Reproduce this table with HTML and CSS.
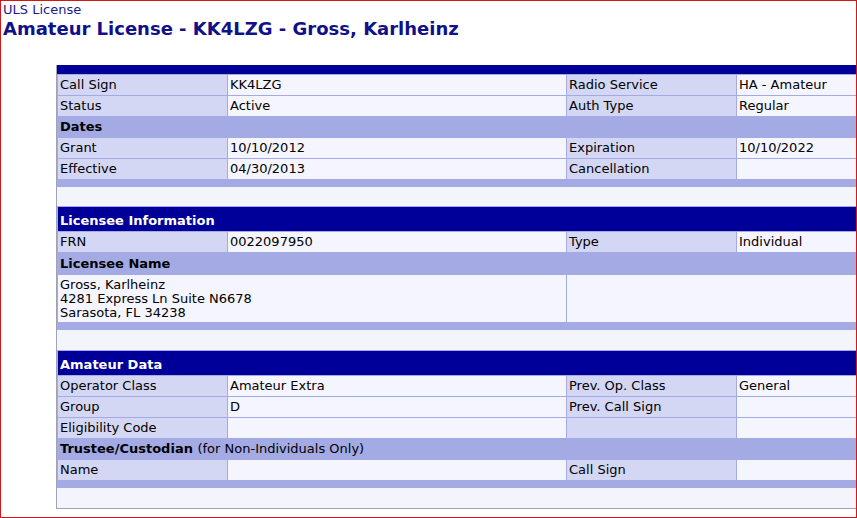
FILE: index.html
```html
<!DOCTYPE html>
<html>
<head>
<meta charset="utf-8">
<link rel="stylesheet" href="styles.css">
</head>
<body>
<div class="frame">
  <div class="crumb">ULS License</div>
  <h1 class="title">Amateur License - KK4LZG - Gross, Karlheinz</h1>
  <div class="panel">
    <div class="topbar"></div>
    <table class="sec">
      <colgroup><col class="c1"><col class="c2"><col class="c3"><col class="c4"></colgroup>
      <tr><td class="lbl">Call Sign</td><td class="val">KK4LZG</td><td class="lbl">Radio Service</td><td class="val">HA - Amateur</td></tr>
      <tr><td class="lbl">Status</td><td class="val">Active</td><td class="lbl">Auth Type</td><td class="val">Regular</td></tr>
      <tr><td class="sub" colspan="4">Dates</td></tr>
      <tr><td class="lbl">Grant</td><td class="val">10/10/2012</td><td class="lbl">Expiration</td><td class="val">10/10/2022</td></tr>
      <tr><td class="lbl">Effective</td><td class="val">04/30/2013</td><td class="lbl">Cancellation</td><td class="val"></td></tr>
      <tr><td class="band" colspan="4"></td></tr>
    </table>
    <div class="gap first"></div>
    <table class="sec">
      <colgroup><col class="c1"><col class="c2"><col class="c3"><col class="c4"></colgroup>
      <tr><td class="head" colspan="4">Licensee Information</td></tr>
      <tr><td class="lbl">FRN</td><td class="val">0022097950</td><td class="lbl">Type</td><td class="val">Individual</td></tr>
      <tr><td class="sub tall" colspan="4">Licensee Name</td></tr>
      <tr><td class="val addr" colspan="2">Gross, Karlheinz<br>4281 Express Ln Suite N6678<br>Sarasota, FL 34238</td><td class="val" colspan="2"></td></tr>
      <tr><td class="band" colspan="4"></td></tr>
    </table>
    <div class="gap"></div>
    <table class="sec">
      <colgroup><col class="c1"><col class="c2"><col class="c3"><col class="c4"></colgroup>
      <tr><td class="head" colspan="4">Amateur Data</td></tr>
      <tr><td class="lbl">Operator Class</td><td class="val">Amateur Extra</td><td class="lbl">Prev. Op. Class</td><td class="val">General</td></tr>
      <tr><td class="lbl">Group</td><td class="val">D</td><td class="lbl">Prev. Call Sign</td><td class="val"></td></tr>
      <tr><td class="lbl">Eligibility Code</td><td class="val"></td><td class="lbl"></td><td class="val"></td></tr>
      <tr><td class="sub" colspan="4">Trustee/Custodian <span class="note">(for Non-Individuals Only)</span></td></tr>
      <tr><td class="lbl">Name</td><td class="val"></td><td class="lbl">Call Sign</td><td class="val"></td></tr>
      <tr><td class="band" colspan="4"></td></tr>
    </table>
    <div class="gap"></div>
  </div>
</div>
</body>
</html>
```

FILE: styles.css
```css
html, body {
  margin: 0;
  padding: 0;
  background: #ffffff;
}
.frame {
  box-sizing: border-box;
  width: 857px;
  height: 518px;
  border: 1px solid #d01818;
  overflow: hidden;
  font-family: "DejaVu Sans", Verdana, sans-serif;
  color: #000;
}
.crumb {
  margin: 1px 0 0 2px;
  font-size: 13px;
  line-height: 15px;
  color: #1a1a8c;
}
.title {
  margin: 0 0 0 2px;
  font-size: 18px;
  line-height: 24px;
  font-weight: bold;
  color: #10108a;
}
.panel {
  margin: 24px 0 0 55px;
  width: 851px;
  background: #f4f4fd;
  border-left: 1px solid #a0a0b8;
  border-bottom: 1px solid #a0a0b8;
}
.topbar {
  height: 9px;
  background: #000099;
}
.sec {
  border-collapse: separate;
  border-spacing: 1px;
  background: #a4aae4;
  table-layout: fixed;
  width: 851px;
  font-size: 13px;
}
.c1 { width: 169px; }
.c2 { width: 338px; }
.c3 { width: 169px; }
.c4 { width: 170px; }
.sec td {
  box-sizing: border-box;
  padding: 0 3px 0 2px;
  height: 20px;
  line-height: 16px;
  vertical-align: middle;
  white-space: nowrap;
  overflow: hidden;
}
.lbl { background: #d3d7f4; }
.val { background: #f5f5ff; }
.sec td.sub {
  background: #a4aae4;
  font-weight: bold;
}
.sec td.sub.tall {
  height: 21px;
  padding-top: 1px;
}
.sub .note { font-weight: normal; }
.sec td.head {
  background: #000099;
  color: #ffffff;
  font-weight: bold;
  height: 24px;
  padding-top: 3px;
}
.sec td.addr {
  height: 47px;
  line-height: 14px;
  vertical-align: top;
  padding-top: 3px;
}
.sec td.band {
  height: 6px;
  padding: 0;
  background: #a4aae4;
}
.gap { height: 20px; }
.gap.first { height: 19px; }
```
